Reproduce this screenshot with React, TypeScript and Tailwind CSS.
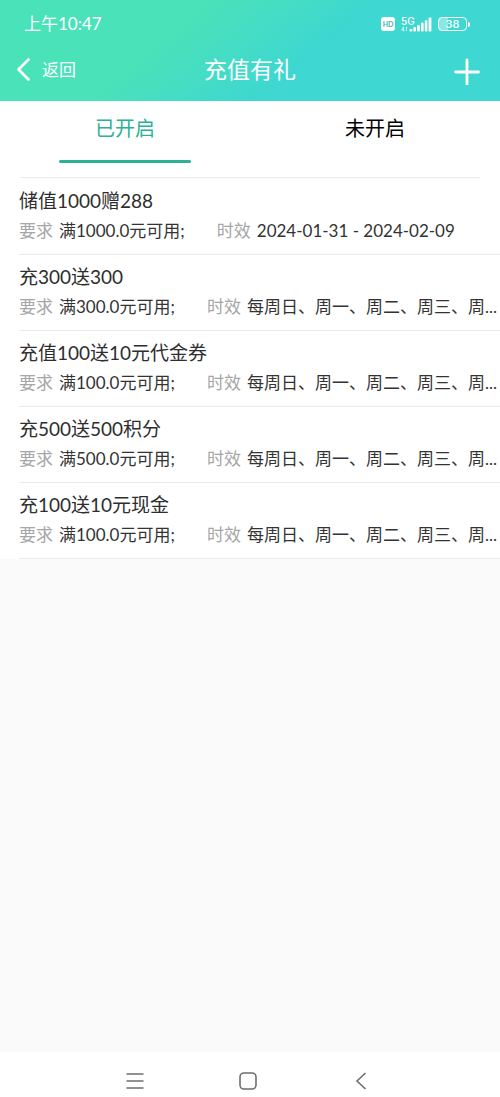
import { useState } from 'react'

type Activity = {
    title: string
    require: string
    period: string
}

const WEEK = '每周日、周一、周二、周三、周...'

const activities: Activity[] = [
    { title: '储值1000赠288', require: '满1000.0元可用;', period: '2024-01-31 - 2024-02-09' },
    { title: '充300送300', require: '满300.0元可用;', period: WEEK },
    { title: '充值100送10元代金券', require: '满100.0元可用;', period: WEEK },
    { title: '充500送500积分', require: '满500.0元可用;', period: WEEK },
    { title: '充100送10元现金', require: '满100.0元可用;', period: WEEK },
]

const tabs = ['已开启', '未开启']

const StatusBar = () => (
    <div className="flex h-12 items-center justify-between pl-6 pr-[30px]">
        <span className="text-[17px] leading-6">上午10:47</span>
        <div className="flex items-center">
            <span className="flex h-3.5 w-3.5 items-center justify-center rounded-[3px] bg-white text-[7px] font-bold leading-none text-[#3fb5b3]">HD</span>
            <div className="ml-1.5 grid w-4 justify-items-start">
                <span className="font-['Inter',sans-serif] text-[10px] font-medium leading-[10px]">5G</span>
                <svg width="8" height="6" viewBox="0 0 8 6" fill="none" stroke="white" strokeOpacity="0.8" strokeWidth="0.8" aria-hidden="true">
                    <path d="M2.6 5.5V.8L.4 4h3M5.5 5V1M4.7 2l.8-1 .8 1" />
                </svg>
            </div>
            <svg className="-ml-2" width="23" height="16" viewBox="0 0 23 16" fill="white" aria-hidden="true">
                <rect x="0.4" y="13" width="3" height="2.5" rx="1" />
                <rect x="4.4" y="11" width="2.6" height="4.5" rx="0.8" />
                <rect x="8.2" y="9" width="2.6" height="6.5" rx="0.8" />
                <rect x="12" y="6.6" width="2.6" height="8.9" rx="0.8" />
                <rect x="15.8" y="4.2" width="2.6" height="11.3" rx="0.8" />
                <rect x="19.6" y="1.5" width="2.8" height="14" rx="0.8" />
            </svg>
            <div className="ml-1.5 flex items-center gap-px">
                <span className="flex h-[14px] w-[29px] items-center justify-center rounded-[4px] border border-white bg-linear-to-r from-white/40 from-35% to-transparent to-35% font-['Inter',sans-serif] text-[11px] font-medium leading-none">38</span>
                <span className="h-[5px] w-0.5 rounded-r bg-white" />
            </div>
        </div>
    </div>
)

const Header = () => (
    <header className="bg-[linear-gradient(140deg,#4ae2b9_0%,#4ae2b9_34%,#3ed7d1_61%,#3ed7d1_100%)] pb-2.5 text-white">
        <StatusBar />
        <div className="grid h-[43px] grid-cols-[1fr_auto_1fr] items-center px-4">
            <button type="button" className="flex items-center gap-3 justify-self-start text-[17px] leading-6">
                <svg width="14" height="24" viewBox="0 0 14 24" fill="none" stroke="white" strokeWidth="2.6" strokeLinecap="round" strokeLinejoin="round" aria-hidden="true">
                    <path d="M12.5 1.5 2.5 11.5l10 10" />
                </svg>
                返回
            </button>
            <h1 className="pb-0.5 text-[23px] leading-8">充值有礼</h1>
            <button type="button" aria-label="添加" className="mr-1 justify-self-end">
                <svg width="26" height="30" viewBox="0 0 26 30" fill="none" stroke="white" strokeWidth="2.8" strokeLinecap="round" aria-hidden="true">
                    <path d="M13 5v24M1.5 17h23" />
                </svg>
            </button>
        </div>
    </header>
)

const ActivityItem = ({ item }: { item: Activity }) => (
    <li className="ml-[19px] h-[76px] border-b border-[#ebebeb] pt-2">
        <h2 className="text-[19px] leading-7 text-[#2e2e2e]">{item.title}</h2>
        <div className="flex whitespace-nowrap pt-1 text-[17px] leading-6 text-[#333333]">
            <p className="shrink-0">
                <span className="mr-1.5 text-[#a6a6a6]">要求</span>
                {item.require}
            </p>
            <p className="ml-8">
                <span className="mr-1.5 text-[#a6a6a6]">时效</span>
                {item.period}
            </p>
        </div>
    </li>
)

const SystemNav = () => (
    <nav className="flex h-[45px] items-center justify-center gap-[95px] bg-white pr-1 pt-3 text-[#6e6e6e]">
        <button type="button" aria-label="最近任务">
            <svg width="18" height="18" viewBox="0 0 18 18" fill="none" stroke="currentColor" strokeWidth="1.6" aria-hidden="true">
                <path d="M.5 2h17M.5 9h17M.5 16h17" />
            </svg>
        </button>
        <button type="button" aria-label="主屏幕">
            <svg width="18" height="18" viewBox="0 0 18 18" fill="none" stroke="currentColor" strokeWidth="1.6" aria-hidden="true">
                <rect x="1" y="1" width="16" height="16" rx="4" />
            </svg>
        </button>
        <button type="button" aria-label="返回上一页">
            <svg width="18" height="18" viewBox="0 0 18 18" fill="none" stroke="currentColor" strokeWidth="1.6" aria-hidden="true">
                <path d="M13.5 1 5 9l8.5 8" />
            </svg>
        </button>
    </nav>
)

const App = () => {
    const [active, setActive] = useState(0)

    return (
        <div className="flex min-h-screen flex-col bg-[#fafafa] font-['Lato','Noto_Sans_CJK_SC',sans-serif]">
            <Header />
            <main className="flex-1">
                <div className="bg-white">
                    <div role="tablist" className="mx-5 -mb-px border-b border-[#ebebeb] pb-3.5">
                        <div className="-mx-5 grid grid-cols-2">
                            {tabs.map((tab, i) => (
                                <button
                                    key={tab}
                                    type="button"
                                    role="tab"
                                    aria-selected={active === i}
                                    onClick={() => setActive(i)}
                                    className={`flex flex-col items-center pt-3 text-xl leading-[30px] ${active === i ? 'text-[#2cb194]' : 'text-black'}`}
                                >
                                    {tab}
                                    <span className={`mt-[17px] h-[3px] w-[132px] rounded-full ${active === i ? 'bg-[#2cb194]' : 'bg-transparent'}`} />
                                </button>
                            ))}
                        </div>
                    </div>
                    <ul className="pt-0.5">
                        {activities.map((item) => (
                            <ActivityItem key={item.title} item={item} />
                        ))}
                    </ul>
                </div>
            </main>
            <SystemNav />
        </div>
    )
}

export default App
